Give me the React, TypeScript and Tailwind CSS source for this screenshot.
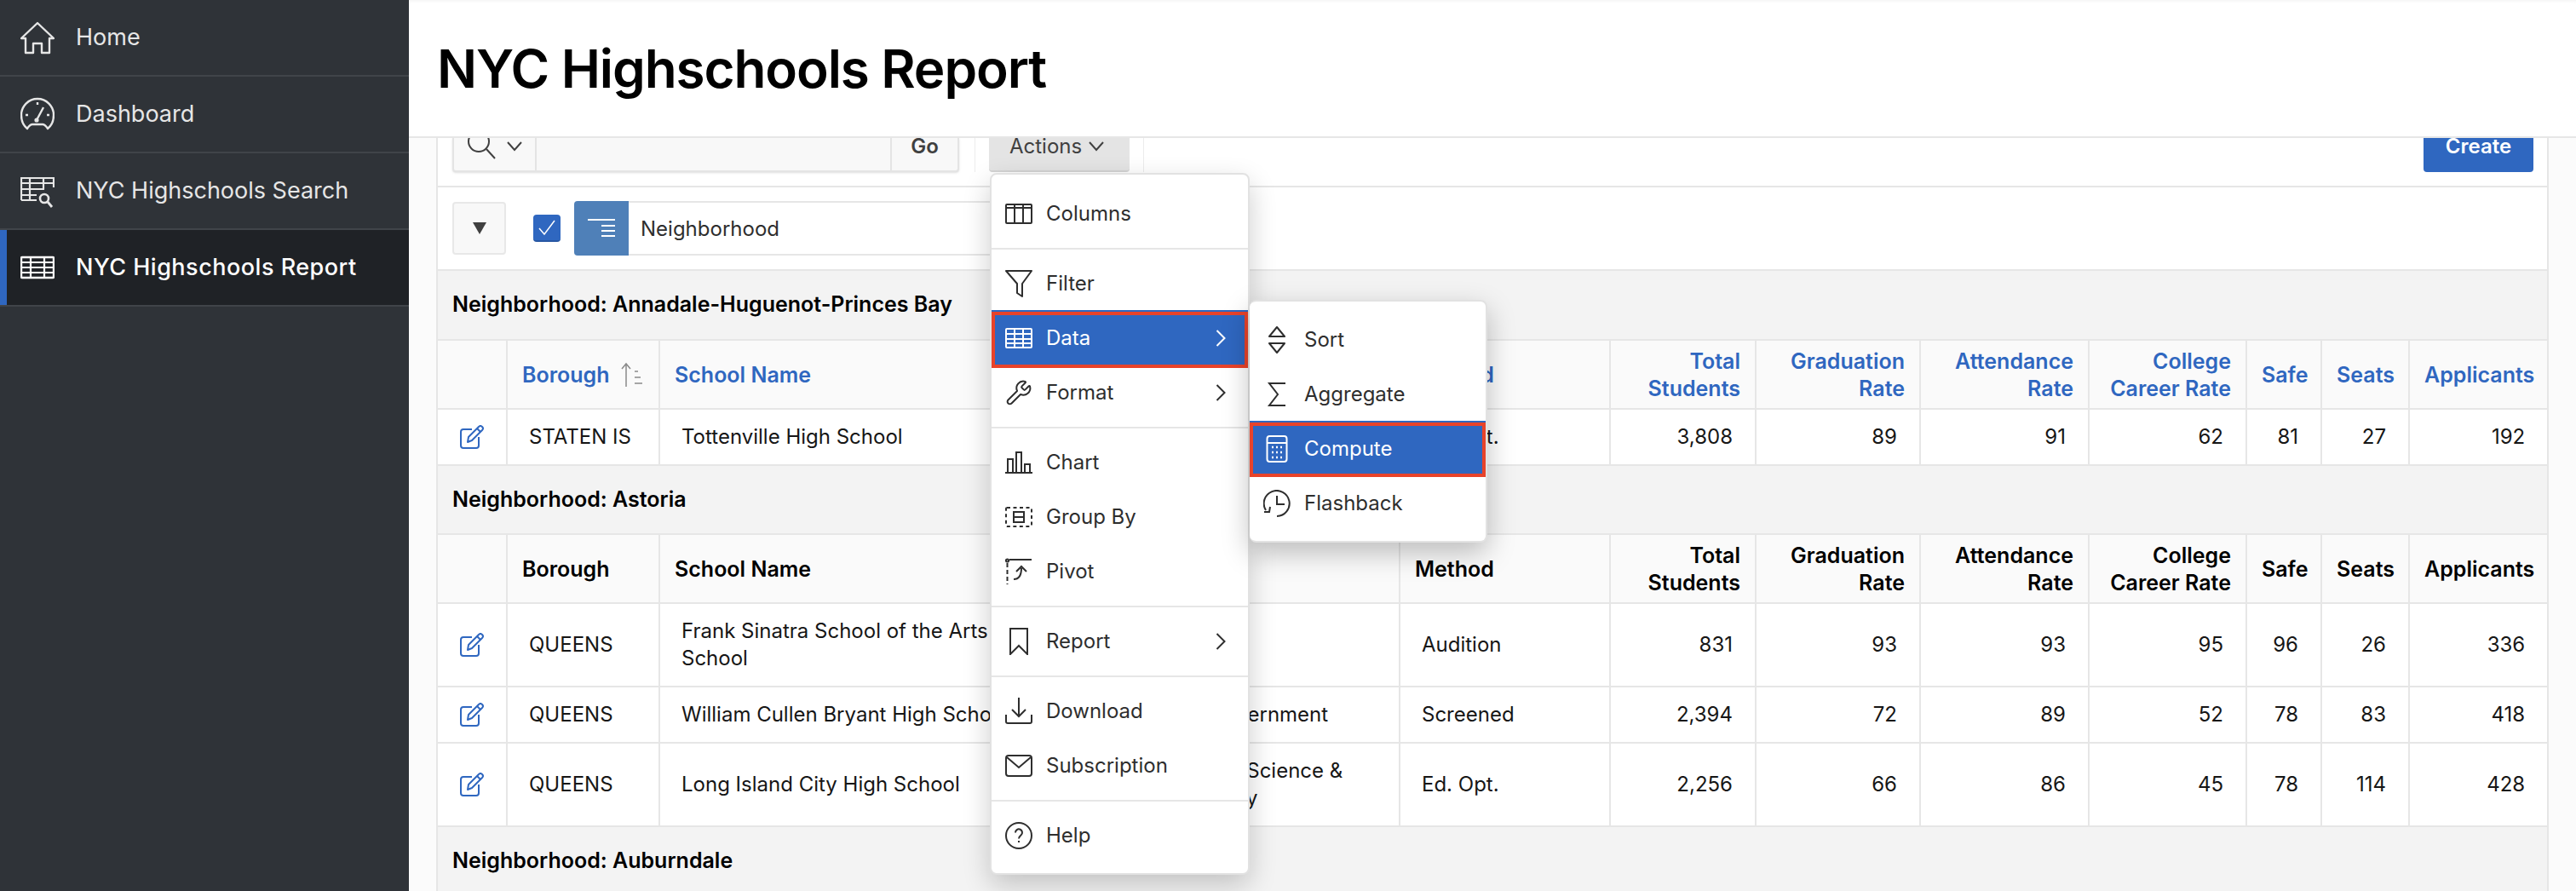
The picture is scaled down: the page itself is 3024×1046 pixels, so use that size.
import { ReactNode } from 'react';
import { Wrench } from 'lucide-react';

function Ic({ size = 32, className = '', children }: { size?: number; className?: string; children: ReactNode }) {
  return (
    <svg width={size} height={size} viewBox={`0 0 ${size} ${size}`} fill="none" stroke="currentColor" strokeWidth={2} className={'shrink-0 ' + className}>
      {children}
    </svg>
  );
}

const HomeIcon = () => (
  <Ic size={40}>
    <path d="M6 38V21H1L20 3l19 18h-5v17H25V27H15v11z" strokeWidth={2.4} strokeLinejoin="round" />
  </Ic>
);
const DashIcon = () => (
  <Ic size={40}>
    <path d="M8 37C3 33 1 27 1 21a19 19 0 0 1 38 0c0 6-2 12-7 16-2-3-3-5-6-5H14c-3 0-4 2-6 5z" strokeWidth={2.4} strokeLinejoin="round" />
    <path d="M19 27l8-15M20 6v3M6 21h3M31 21h3" strokeWidth={2.4} />
    <circle cx="19" cy="27" r="1.6" fill="currentColor" />
  </Ic>
);
const SearchGridIcon = () => (
  <Ic size={40}>
    <path d="M1 31V5h38v11M1 31h18M1 11h38M1 18h27M1 25h18M11 5v26M27 5v13" strokeWidth={2.2} />
    <circle cx="28" cy="29" r="5" strokeWidth={2.6} />
    <path d="M32 33l5 6" strokeWidth={2.8} />
  </Ic>
);
const GridIcon = () => (
  <Ic size={40}>
    <rect x="1" y="8" width="38" height="24" rx="1" strokeWidth={2.4} />
    <path d="M1 14h38M1 20h38M1 26h38M12 8v24M28 8v24" strokeWidth={2.2} />
  </Ic>
);

const ColumnsIcon = () => (
  <Ic>
    <rect x="1" y="5" width="30" height="22" rx="1" />
    <path d="M1 9h30M11 5v22M21 5v22" />
  </Ic>
);
const FilterIcon = () => (
  <Ic>
    <path d="M1 1h30L20 16v15l-6-4V16z" strokeLinejoin="round" />
  </Ic>
);
const DataIcon = () => (
  <Ic>
    <rect x="1" y="5" width="30" height="22" rx="1" />
    <path d="M1 11h30M1 17h30M1 22h30M11 5v22M21 5v22" />
  </Ic>
);
const ChartIcon = () => (
  <Ic>
    <path d="M0 28h32M3 28V12h6v16M13 28V4h6v24M23 28V18h6v10" />
  </Ic>
);
const GroupIcon = () => (
  <Ic>
    <rect x="1" y="5" width="30" height="22" rx="1" strokeDasharray="4 3.5" />
    <rect x="10" y="10" width="12" height="12" />
    <path d="M10 16h12" />
  </Ic>
);
const PivotIcon = () => (
  <Ic>
    <circle cx="2.5" cy="3" r="1.6" />
    <path d="M5 2h26" />
    <path d="M2.5 6v25" strokeDasharray="5 3" />
    <path d="M10 25c6 0 9-4 9-13M13 16l6-6 6 6" />
  </Ic>
);
const BookmarkIcon = () => (
  <Ic>
    <path d="M6 1h20v30l-10-10-10 10z" />
  </Ic>
);
const DownloadIcon = () => (
  <Ic>
    <path d="M16 0v22M8 14l8 8 8-8M1 20v8a2 2 0 0 0 2 2h26a2 2 0 0 0 2-2v-8" />
  </Ic>
);
const MailIcon = () => (
  <Ic>
    <rect x="1" y="4" width="30" height="24" rx="3" />
    <path d="M2 6l14 12L30 6" />
  </Ic>
);
const HelpIcon = () => (
  <Ic>
    <circle cx="16" cy="16" r="15" />
    <path d="M12 12.5a4 4 0 1 1 6.5 3c-1.5 1.2-2.5 2-2.5 4M16 22v2" />
  </Ic>
);
const SortIcon = () => (
  <Ic>
    <path d="M16 1l9 11H7zM7 20h18l-9 11z" strokeLinejoin="round" />
  </Ic>
);
const SigmaIcon = () => (
  <Ic>
    <path d="M26 3H7l10 13L7 29h19" />
  </Ic>
);
const CalcIcon = () => (
  <Ic>
    <rect x="4.5" y="1" width="23" height="30" rx="3" />
    <path d="M4.5 9h23" />
    <path d="M10 14h2M15 14h2M20 14h2M10 20h2M15 20h2M20 20h2M10 26h2M15 26h2M20 26h2" strokeWidth={2.4} />
  </Ic>
);
const FlashbackIcon = () => (
  <Ic>
    <path d="M3 24A15 15 0 1 1 16 31M16 7v10h9M1 26h6l1-6" />
  </Ic>
);
const Chevron = () => (
  <svg width="12" height="20" viewBox="0 0 12 20" fill="none" stroke="currentColor" strokeWidth={2} className="shrink-0">
    <path d="M1.5 1l9 9-9 9" />
  </svg>
);
const EditIcon = () => (
  <svg width="28" height="28" viewBox="0 0 28 28" fill="none" stroke="#2f67c0" strokeWidth={2} className="mx-auto">
    <path d="M14 5H4a3 3 0 0 0-3 3v16a3 3 0 0 0 3 3h15a3 3 0 0 0 3-3V14" />
    <path d="M9 20l1-6L22 2a2.8 2.8 0 0 1 4 4L14 18z" strokeLinejoin="round" />
    <path d="M20 4l4 4" />
  </svg>
);

const sideItems = [
  { label: 'Home', icon: <HomeIcon /> },
  { label: 'Dashboard', icon: <DashIcon /> },
  { label: 'NYC Highschools Search', icon: <SearchGridIcon /> },
  { label: 'NYC Highschools Report', icon: <GridIcon />, active: true },
];

function Sidebar() {
  return (
    <aside className="w-[480px] shrink-0 bg-[#2f3338] text-[#e6e6e6] text-[27px]">
      {sideItems.map((item) => (
        <div
          key={item.label}
          className={
            'h-[90px] flex items-center gap-[25px] pl-6 border-b-2 border-[#404449] relative ' +
            (item.active ? 'bg-[#1f2226] text-white font-medium tracking-[0.5px]' : '')
          }
        >
          {item.active && <div className="absolute left-0 top-0 bottom-0 w-2 bg-[#2f67c0]" />}
          {item.icon}
          <span className="mt-px">{item.label}</span>
        </div>
      ))}
    </aside>
  );
}

function MenuItem({ icon, label, arrow, on, hl }: { icon: ReactNode; label: string; arrow?: boolean; on?: boolean; hl?: string }) {
  return (
    <div className={'h-16 flex items-center pl-[16px] pr-[26px] relative ' + (on ? 'bg-[#2f67c0] text-white' : '')}>
      {icon}
      <span className="ml-4 flex-1">{label}</span>
      {arrow && <Chevron />}
      {on && <div className={'absolute inset-x-0 border-4 border-[#e8432a] shadow-[0_-2px_0_#2f67c0] z-10 ' + hl} />}
    </div>
  );
}

const Sep = () => <div className="my-2 h-0.5 bg-[#e6e6e6]" />;

function ActionsMenu() {
  return (
    <div className="absolute left-[1162px] top-[203px] w-[305px] h-[824px] bg-white rounded-lg border-2 border-[#e2e2e2] py-[14px] text-[#2e2e2e] shadow-[0_12px_32px_rgba(0,0,0,0.2)] z-20">
      <MenuItem icon={<ColumnsIcon />} label="Columns" />
      <Sep />
      <MenuItem icon={<FilterIcon />} label="Filter" />
      <MenuItem icon={<DataIcon />} label="Data" arrow on hl="top-[1px] bottom-[-3px]" />
      <MenuItem icon={<Wrench size={32} strokeWidth={1.5} className="shrink-0" />} label="Format" arrow />
      <Sep />
      <MenuItem icon={<ChartIcon />} label="Chart" />
      <MenuItem icon={<GroupIcon />} label="Group By" />
      <MenuItem icon={<PivotIcon />} label="Pivot" />
      <Sep />
      <MenuItem icon={<BookmarkIcon />} label="Report" arrow />
      <Sep />
      <MenuItem icon={<DownloadIcon />} label="Download" />
      <MenuItem icon={<MailIcon />} label="Subscription" />
      <Sep />
      <MenuItem icon={<HelpIcon />} label="Help" />
    </div>
  );
}

function DataMenu() {
  return (
    <div className="absolute left-[1467px] top-[352px] w-[279px] h-[285px] bg-white rounded-lg border-2 border-l-0 border-[#e2e2e2] py-[13px] text-[#2e2e2e] shadow-[0_12px_32px_rgba(0,0,0,0.25)] z-30">
      <MenuItem icon={<SortIcon />} label="Sort" />
      <MenuItem icon={<SigmaIcon />} label="Aggregate" />
      <MenuItem icon={<CalcIcon />} label="Compute" on hl="top-[1px] bottom-[-1px]" />
      <MenuItem icon={<FlashbackIcon />} label="Flashback" />
    </div>
  );
}

const colWidths = [82, 179, 544, 325, 247, 171, 193, 198, 185, 88, 103, 161];

type Head = { label: ReactNode; right?: boolean };

const heads: Head[] = [
  { label: '' },
  { label: 'Borough' },
  { label: 'School Name' },
  { label: '' },
  { label: 'Method' },
  { label: <>Total<br />Students</>, right: true },
  { label: <>Graduation<br />Rate</>, right: true },
  { label: <>Attendance<br />Rate</>, right: true },
  { label: <>College<br />Career Rate</>, right: true },
  { label: 'Safe', right: true },
  { label: 'Seats', right: true },
  { label: 'Applicants', right: true },
];

function Band({ label, h }: { label: string; h: string }) {
  return (
    <tr className={h}>
      <td colSpan={12} className="bg-[#f3f3f3] border-b-2 border-[#e6e6e6] pl-[17px] text-[25px] font-semibold text-black">
        {label}
      </td>
    </tr>
  );
}

function HeadRow({ link }: { link?: boolean }) {
  return (
    <tr className="h-[81px]">
      {heads.map((head, i) => (
        <th
          key={i}
          className={
            'bg-[#fafafa] border-b-2 border-r-2 last:border-r-0 border-[#e6e6e6] text-[25px] font-semibold pl-[17px] pr-[17px] leading-8 ' +
            (head.right ? 'text-right ' : 'text-left ') +
            (link ? 'text-[#2f67c0]' : 'text-black')
          }
        >
          <span className="inline-flex items-center">
            <span>{head.label}</span>
            {link && i === 1 && (
              <svg width="26" height="30" viewBox="0 0 26 30" fill="none" stroke="#8a8a8a" strokeWidth={1.5} className="ml-3">
                <path d="M7 29V2M2 8l5-6 5 6" />
                <path d="M17 11h4M17 18h7M17 25h9" />
              </svg>
            )}
          </span>
        </th>
      ))}
    </tr>
  );
}

function Row({ h, cells }: { h: string; cells: ReactNode[] }) {
  return (
    <tr className={h}>
      <td className="bg-white border-b-2 border-r-2 border-[#e6e6e6]">
        <EditIcon />
      </td>
      {cells.map((cell, i) => (
        <td
          key={i}
          className={
            'bg-white border-b-2 border-r-2 last:border-r-0 border-[#e6e6e6] leading-8 text-[#161616] ' +
            (i >= 4 ? 'text-right pr-[26px] pl-2' : 'pl-[25px] pr-2')
          }
        >
          {cell}
        </td>
      ))}
    </tr>
  );
}

function Report() {
  return (
    <table className="table-fixed border-separate border-spacing-0 w-[2476px]">
      <colgroup>
        {colWidths.map((w, i) => (
          <col key={i} style={{ width: w }} />
        ))}
      </colgroup>
      <tbody>
        <Band label="Neighborhood: Annadale-Huguenot-Princes Bay" h="h-[82px]" />
        <HeadRow link />
        <Row h="h-[66px]" cells={['STATEN IS', 'Tottenville High School', '', 'Ed. Opt.', '3,808', '89', '91', '62', '81', '27', '192']} />
        <Band label="Neighborhood: Astoria" h="h-[81px]" />
        <HeadRow />
        <Row h="h-[98px]" cells={['QUEENS', <>Frank Sinatra School of the Arts<br />School</>, '', 'Audition', '831', '93', '93', '95', '96', '26', '336']} />
        <Row h="h-[66px]" cells={['QUEENS', 'William Cullen Bryant High School', 'Law & Government', 'Screened', '2,394', '72', '89', '52', '78', '83', '418']} />
        <Row h="h-[98px]" cells={['QUEENS', 'Long Island City High School', <>Computer Science &<br />Technology</>, 'Ed. Opt.', '2,256', '66', '86', '45', '78', '114', '428']} />
        <Band label="Neighborhood: Auburndale" h="h-[81px]" />
      </tbody>
    </table>
  );
}

function Toolbar() {
  return (
    <div className="h-[58px] border-b-2 border-[#e6e6e6] bg-white pl-[17px] pr-4 flex items-start overflow-hidden">
      <div className="h-10 w-[595px] flex bg-[#f8f8f8] border-b-2 border-x-2 border-[#e4e4e4] rounded-b-[4px] shadow-sm">
        <div className="w-[97px] border-r-2 border-[#e4e4e4] pl-4 flex items-start gap-3 text-[#404040]">
          <svg width="34" height="34" viewBox="0 0 34 34" fill="none" stroke="currentColor" strokeWidth={2} className="shrink-0 -mt-[9px]">
            <circle cx="13" cy="13" r="12" />
            <path d="M22 22l10 11" />
          </svg>
          <svg width="18" height="12" viewBox="0 0 18 12" fill="none" stroke="currentColor" strokeWidth={2} className="shrink-0 mt-1">
            <path d="M1 1l8 9 8-9" />
          </svg>
        </div>
        <div className="flex-1" />
        <div className="w-[79px] border-l-2 border-[#e4e4e4] text-center font-semibold text-[#404040] leading-5">Go</div>
      </div>
      <div className="h-10 w-px bg-[#ececec] ml-[18px]" />
      <div className="ml-[16px] h-10 w-[165px] flex items-start gap-2 pl-6 bg-[#e4e4e4] border-b-2 border-[#d4d4d4] rounded-b-[4px] text-[#404040] leading-5">
        <span>Actions</span>
        <svg width="18" height="12" viewBox="0 0 18 12" fill="none" stroke="currentColor" strokeWidth={2} className="shrink-0 mt-1">
          <path d="M1 1l8 9 8-9" />
        </svg>
      </div>
      <div className="h-10 w-px bg-[#ececec] ml-[16px]" />
      <div className="ml-auto h-10 w-[129px] bg-[#2f67c0] rounded-b-[4px] text-white font-semibold text-center leading-5">Create</div>
    </div>
  );
}

function FilterRow() {
  return (
    <div className="h-[98px] border-b-2 border-[#e6e6e6] bg-white pl-[17px] flex items-center">
      <div className="w-[63px] h-[62px] bg-[#f8f8f8] border-2 border-[#e8e8e8] rounded-[4px] flex items-center justify-center">
        <svg width="16" height="14" viewBox="0 0 16 14" fill="#404040">
          <path d="M0 0h16L8 14z" />
        </svg>
      </div>
      <div className="ml-8 w-8 h-8 rounded-[4px] bg-[#2f67c0] border-b-2 border-[#2857a3] flex items-center justify-center">
        <svg width="22" height="18" viewBox="0 0 22 18" fill="none" stroke="white" strokeWidth={1.5}>
          <path d="M2 10l6 7L20 1" />
        </svg>
      </div>
      <div className="ml-4 w-16 h-16 bg-[#4f80b8] rounded-l-[4px] flex items-center justify-center">
        <svg width="32" height="22" viewBox="0 0 32 22" fill="none" stroke="white" strokeWidth={2}>
          <path d="M0 1h32M16 8h16M16 14h16M16 20h16" />
        </svg>
      </div>
      <div className="w-[460px] h-16 border-y-2 border-[#e6e6e6] flex items-center pl-[14px] pt-0.5 text-[#2e2e2e]">Neighborhood</div>
    </div>
  );
}

export default function App() {
  return (
    <div className="relative w-[3024px] h-[1046px] overflow-hidden flex bg-[#fbfbfb] text-[24px] [font-family:Inter,sans-serif]">
      <Sidebar />
      <div className="flex-1 min-w-0">
        <header className="h-[162px] bg-white border-b-2 border-[#e6e6e6] flex items-center pl-[33px] shadow-[inset_0_4px_4px_-3px_rgba(0,0,0,0.06)]">
          <h1 className="text-[62px] font-semibold tracking-[-1.1px] text-black">NYC Highschools Report</h1>
        </header>
        <div className="mx-8 border-x-2 border-[#e6e6e6] h-[900px]">
          <Toolbar />
          <FilterRow />
          <Report />
        </div>
      </div>
      <ActionsMenu />
      <DataMenu />
    </div>
  );
}
